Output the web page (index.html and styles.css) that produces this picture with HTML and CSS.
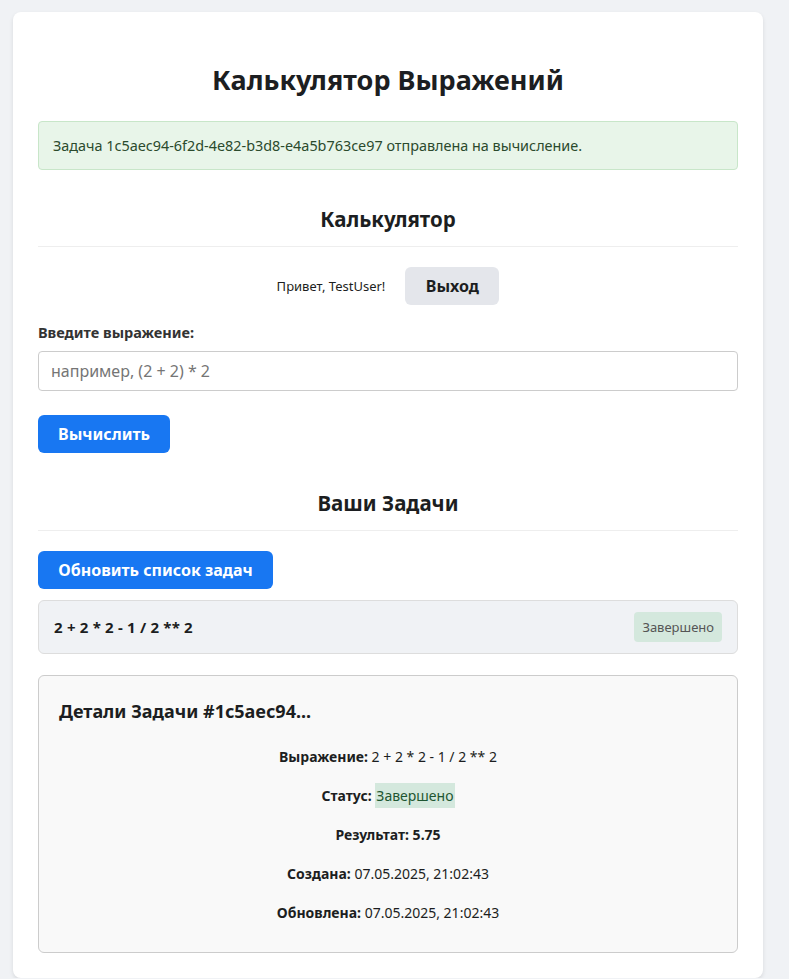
FILE: index.html
```html
<!DOCTYPE html>
<html lang="ru">
<head>
<meta charset="utf-8">
<title>Калькулятор Выражений</title>
<link rel="stylesheet" href="styles.css">
</head>
<body>
<div class="card">
  <h1 class="title">Калькулятор Выражений</h1>
  <div class="alert">Задача 1c5aec94-6f2d-4e82-b3d8-e4a5b763ce97 отправлена на вычисление.</div>

  <h2 class="section">Калькулятор</h2>
  <div class="user-row">
    <span class="greet">Привет, TestUser!</span>
    <button class="btn btn-gray">Выход</button>
  </div>
  <label class="label" for="expr">Введите выражение:</label>
  <input id="expr" class="input" type="text" placeholder="например, (2 + 2) * 2">
  <button class="btn btn-blue calc">Вычислить</button>

  <h2 class="section section-tasks">Ваши Задачи</h2>
  <button class="btn btn-blue refresh">Обновить список задач</button>
  <div class="task">
    <span class="task-expr">2 + 2 * 2 - 1 / 2 ** 2</span>
    <span class="badge">Завершено</span>
  </div>

  <div class="details">
    <h3 class="details-title">Детали Задачи #1c5aec94...</h3>
    <p class="row"><b>Выражение:</b> 2 + 2 * 2 - 1 / 2 ** 2</p>
    <p class="row"><b>Статус:</b> <span class="status">Завершено</span></p>
    <p class="row"><b>Результат: 5.75</b></p>
    <p class="row"><b>Создана:</b> 07.05.2025, 21:02:43</p>
    <p class="row"><b>Обновлена:</b> 07.05.2025, 21:02:43</p>
  </div>
</div>
</body>
</html>
```

FILE: styles.css
```css
html, body {
  margin: 0;
  padding: 0;
}
body {
  background: #f0f2f5;
  font-family: "Noto Sans", "Open Sans", sans-serif;
  color: #1c1e21;
  padding: 12px 0 0 13px;
}
.card {
  width: 750px;
  box-sizing: border-box;
  background: #fff;
  border-radius: 8px;
  box-shadow: 0 2px 4px rgba(0,0,0,0.1);
  padding: 49px 25px 25px;
  display: flex;
  flex-direction: column;
}
.title {
  margin: 0 0 22px;
  text-align: center;
  font-size: 27px;
  font-weight: 700;
  line-height: 38px;
}
.alert {
  height: 49px;
  box-sizing: border-box;
  background: #e8f5e9;
  border: 1px solid #c8e6c9;
  border-radius: 4px;
  color: #2b4a2d;
  font-size: 14.4px;
  padding: 0 14px;
  display: flex;
  align-items: center;
}
.section {
  margin: 35px 0 0;
  padding-bottom: 13px;
  border-bottom: 1px solid #eee;
  text-align: center;
  font-size: 20.5px;
  line-height: 28px;
  font-weight: 700;
}
.section-tasks {
  margin-top: 36px;
}
.user-row {
  display: flex;
  justify-content: center;
  align-items: center;
  gap: 20px;
  margin-top: 20px;
}
.greet {
  font-size: 13px;
  color: #1c1e21;
}
.btn {
  border: none;
  border-radius: 6px;
  font-family: inherit;
  font-weight: 700;
  font-size: 16px;
  height: 38px;
  padding: 0 20px;
  cursor: pointer;
}
.btn-gray {
  background: #e4e6eb;
  color: #1c1e21;
  width: 94px;
}
.btn-blue {
  background: #1877f2;
  color: #fff;
  align-self: flex-start;
}
.label {
  margin-top: 17px;
  font-size: 14.5px;
  font-weight: 700;
  color: #333;
  line-height: 20px;
}
.input {
  margin-top: 9px;
  height: 40px;
  box-sizing: border-box;
  border: 1px solid #ccc;
  border-radius: 4px;
  font-family: inherit;
  font-size: 16px;
  padding: 0 12px;
}
.input::placeholder {
  color: #757575;
}
.calc {
  margin-top: 24px;
  width: 132px;
}
.refresh {
  margin-top: 20px;
  width: 235px;
}
.task {
  margin-top: 11px;
  height: 54px;
  box-sizing: border-box;
  background: #f0f2f5;
  border: 1px solid #ddd;
  border-radius: 6px;
  display: flex;
  justify-content: space-between;
  align-items: center;
  padding: 0 15px;
}
.task-expr {
  font-size: 15px;
  font-weight: 700;
  letter-spacing: 0.2px;
}
.badge {
  background: #d4e8dd;
  color: #555;
  font-size: 13px;
  padding: 6px 8px;
  border-radius: 4px;
}
.details {
  margin-top: 21px;
  background: #f9f9f9;
  border: 1px solid #ccc;
  border-radius: 6px;
  padding: 18px 20px 20px;
}
.details-title {
  margin: 0 0 9px;
  font-size: 18px;
  line-height: 34px;
  font-weight: 700;
}
.row {
  margin: 0;
  text-align: center;
  font-size: 14px;
  line-height: 39px;
}
.row b {
  font-weight: 700;
}
.status {
  background: #d4e8dd;
  color: #1e5631;
  padding: 3px 1px;
}
```
